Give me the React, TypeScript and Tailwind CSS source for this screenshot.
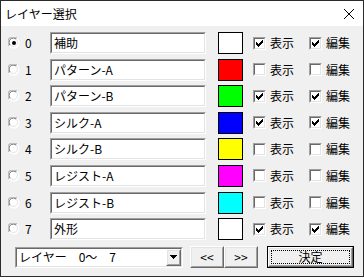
import React from "react";

const layers = [
  { name: "補助", color: "#ffffff", show: true, edit: true },
  { name: "パターン-A", color: "#ff0000", show: false, edit: false },
  { name: "パターン-B", color: "#00ff00", show: true, edit: true },
  { name: "シルク-A", color: "#0000ff", show: true, edit: true },
  { name: "シルク-B", color: "#ffff00", show: false, edit: false },
  { name: "レジスト-A", color: "#ff00ff", show: false, edit: false },
  { name: "レジスト-B", color: "#00ffff", show: false, edit: false },
  { name: "外形", color: "#ffffff", show: true, edit: true },
];

const font = { fontFamily: '"MS UI Gothic", "Noto Sans CJK JP", sans-serif' };

function Radio({ checked }: { checked: boolean }) {
  return (
    <svg width="12" height="12" viewBox="0 0 12 12" className="shrink-0">
      <circle cx="6" cy="6" r="5.5" fill="#ffffff" />
      <path d="M1.2 9 A5.3 5.3 0 0 1 9 1.2" fill="none" stroke="#a0a0a0" strokeWidth="1" />
      <path d="M2.3 8.3 A4.2 4.2 0 0 1 8.3 2.3" fill="none" stroke="#696969" strokeWidth="1" />
      <path d="M9 1.2 A5.3 5.3 0 0 1 1.2 9" fill="none" stroke="#ffffff" strokeWidth="1" />
      <path d="M8.3 2.3 A4.2 4.2 0 0 1 2.3 8.3" fill="none" stroke="#e3e3e3" strokeWidth="1" />
      {checked && <circle cx="6" cy="6" r="2" fill="#000000" />}
    </svg>
  );
}

function Check({ checked, label }: { checked: boolean; label: string }) {
  return (
    <div className="flex items-center">
      <div className="w-[13px] h-[13px] shrink-0 border border-t-[#a0a0a0] border-l-[#a0a0a0] border-b-white border-r-white">
        <div className="w-full h-full bg-white border border-t-[#696969] border-l-[#696969] border-b-[#e3e3e3] border-r-[#e3e3e3]">
          {checked && (
            <svg width="9" height="9" viewBox="0 0 9 9" shapeRendering="crispEdges" className="block">
              <path
                d="M1 3h1v3H1zM2 4h1v3H2zM3 5h1v3H3zM4 4h1v3H4zM5 3h1v3H5zM6 2h1v3H6zM7 1h1v3H7z"
                fill="#000"
              />
            </svg>
          )}
        </div>
      </div>
      <span className="ml-[4px] text-[12px] leading-none text-black" style={font}>
        {label}
      </span>
    </div>
  );
}

function Sunken({ className, children }: { className: string; children?: React.ReactNode }) {
  return (
    <div className={`border border-t-[#a0a0a0] border-l-[#a0a0a0] border-b-white border-r-white ${className}`}>
      <div className="w-full h-full bg-white border border-t-[#696969] border-l-[#696969] border-b-[#e3e3e3] border-r-[#e3e3e3] flex items-center">
        {children}
      </div>
    </div>
  );
}

function Raised({ className, children }: { className: string; children?: React.ReactNode }) {
  return (
    <div className={`bg-[#f0f0f0] border border-t-white border-l-white border-b-[#696969] border-r-[#696969] ${className}`}>
      <div className="w-full h-full border border-t-[#e3e3e3] border-l-[#e3e3e3] border-b-[#a0a0a0] border-r-[#a0a0a0] flex items-center justify-center">
        {children}
      </div>
    </div>
  );
}

export default function App() {
  return (
    <div className="w-[364px] h-[277px] bg-[#f0f0f0] border border-[#2b2b2b] flex flex-col" style={font}>
      <div className="h-[25px] bg-white flex items-center justify-between pl-[4px] pr-[8px]">
        <span className="text-[12px] text-black">レイヤー選択</span>
        <svg width="12" height="12" viewBox="0 0 12 12">
          <path d="M1 1L11 11M11 1L1 11" stroke="#000" strokeWidth="1" />
        </svg>
      </div>
      <div className="flex flex-col gap-[4.6px] pt-[6px]">
        {layers.map((l, i) => (
          <div key={i} className="h-[22px] flex items-center pl-[7px]">
            <Radio checked={i === 0} />
            <span className="ml-[5px] w-[25px] text-[12px] text-black leading-none">{i}</span>
            <Sunken className="w-[156px] h-[22px]">
              <span className="pl-[2px] text-[12px] text-black leading-none">{l.name}</span>
            </Sunken>
            <div className="ml-[12px] w-[25px] h-[22px] border border-black" style={{ backgroundColor: l.color }} />
            <div className="ml-[10px] w-[56px]">
              <Check checked={l.show} label="表示" />
            </div>
            <Check checked={l.edit} label="編集" />
          </div>
        ))}
      </div>
      <div className="flex items-center mt-[6px] pl-[14px]">
        <Sunken className="w-[168px] h-[21px]">
          <span className="flex-1 pl-[2px] text-[12px] text-black leading-none whitespace-pre">レイヤー　0～　7</span>
          <Raised className="w-[15px] h-[17px] mr-[0px]">
            <svg width="7" height="4" viewBox="0 0 7 4" shapeRendering="crispEdges">
              <path d="M0 0h7v1H0zM1 1h5v1H1zM2 2h3v1H2zM3 3h1v1H3z" fill="#000" />
            </svg>
          </Raised>
        </Sunken>
        <Raised className="ml-[7px] w-[34px] h-[22px]">
          <span className="text-[12px] text-black leading-none">&lt;&lt;</span>
        </Raised>
        <Raised className="w-[34px] h-[22px]">
          <span className="text-[12px] text-black leading-none">&gt;&gt;</span>
        </Raised>
        <div className="ml-[9px] w-[87px] h-[22px] border border-black">
          <Raised className="w-full h-full">
            <div className="w-[79px] h-[14px] border border-dotted border-black flex items-center justify-center">
              <span className="text-[12px] text-black leading-none">決定</span>
            </div>
          </Raised>
        </div>
      </div>
    </div>
  );
}
